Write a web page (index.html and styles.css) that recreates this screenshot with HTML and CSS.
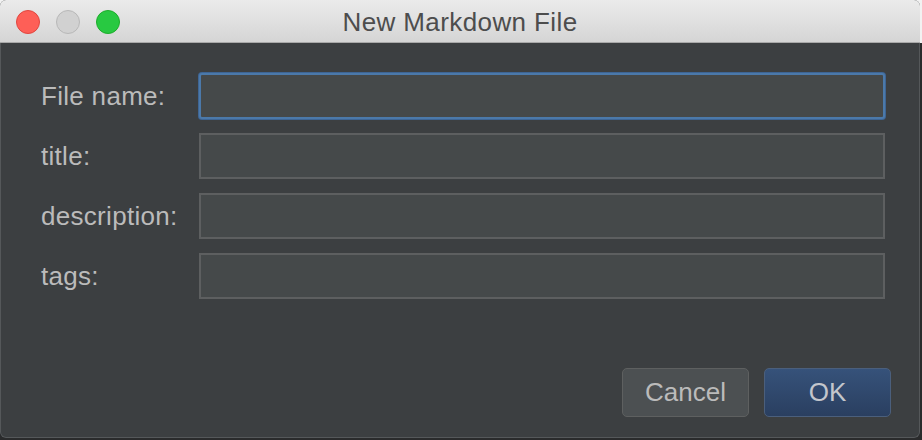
FILE: index.html
```html
<!DOCTYPE html>
<html>
<head>
<meta charset="utf-8">
<link rel="stylesheet" href="styles.css">
</head>
<body>
<div class="window">
  <div class="titlebar">
    <div class="lights">
      <span class="light red"></span>
      <span class="light gray"></span>
      <span class="light green"></span>
    </div>
    <div class="title">New Markdown File</div>
    <div></div>
  </div>
  <div class="content">
    <div class="form">
      <label class="label">File name:</label>
      <div class="field focused"></div>
      <label class="label">title:</label>
      <div class="field"></div>
      <label class="label">description:</label>
      <div class="field"></div>
      <label class="label">tags:</label>
      <div class="field"></div>
    </div>
    <div class="footer">
      <button class="btn">Cancel</button>
      <button class="btn primary">OK</button>
    </div>
  </div>
</div>
</body>
</html>
```
FILE: styles.css
```css
html, body {
  margin: 0;
  padding: 0;
}
body {
  width: 922px;
  height: 440px;
  background: linear-gradient(#f2f2f2 0 43px, #2a2b2c 43px);
  font-family: "Liberation Sans", Arial, sans-serif;
}
.window {
  width: 920px;
  height: 438px;
  border-radius: 6px;
  overflow: hidden;
  display: flex;
  flex-direction: column;
  background: #3c3f41;
}
.titlebar {
  height: 42px;
  flex: none;
  border-bottom: 1px solid #a9a9a9;
  background: linear-gradient(#ebebeb, #d5d5d5);
  display: grid;
  grid-template-columns: 1fr auto 1fr;
  align-items: center;
}
.lights {
  display: flex;
  gap: 16px;
  padding-left: 16px;
  padding-top: 2px;
}
.light {
  width: 22px;
  height: 22px;
  border-radius: 50%;
  border: 1px solid;
}
.red { background: #fe5f57; border-color: #e1463f; }
.gray { background: #d1d1d1; border-color: #b8b8b8; }
.green { background: #28c941; border-color: #1dad2b; }
.title {
  font-size: 26px;
  color: #4d4d4d;
  letter-spacing: 0.4px;
  padding-top: 2px;
}
.content {
  flex: 1;
  display: flex;
  flex-direction: column;
  border: 1px solid #55585a;
  border-top: none;
  border-radius: 0 0 6px 6px;
}
.form {
  display: grid;
  grid-template-columns: 158px 1fr;
  grid-auto-rows: 46px;
  row-gap: 14px;
  padding: 30px 34px 0 40px;
  align-items: center;
}
.label {
  font-size: 26px;
  color: #bbbbbb;
  letter-spacing: 0.3px;
}
.field {
  height: 46px;
  box-sizing: border-box;
  background: #45494a;
  border: 2px solid #5d5f60;
}
.field.focused {
  border: 2px solid #4b79aa;
  border-radius: 3px;
  box-shadow: 0 0 0 1px #3e6594;
}
.footer {
  margin-top: auto;
  display: flex;
  justify-content: flex-end;
  gap: 15px;
  padding: 0 28px 20px 0;
}
.btn {
  width: 127px;
  height: 49px;
  box-sizing: border-box;
  border-radius: 5px;
  border: 1px solid #5e6060;
  background: #4c5052;
  color: #bbbbbb;
  font-family: "Liberation Sans", Arial, sans-serif;
  font-size: 26px;
  padding: 0;
}
.btn.primary {
  background: linear-gradient(#36527a, #2a3f60);
  border-color: #4b5f7c;
  color: #c3c6cc;
}
```
